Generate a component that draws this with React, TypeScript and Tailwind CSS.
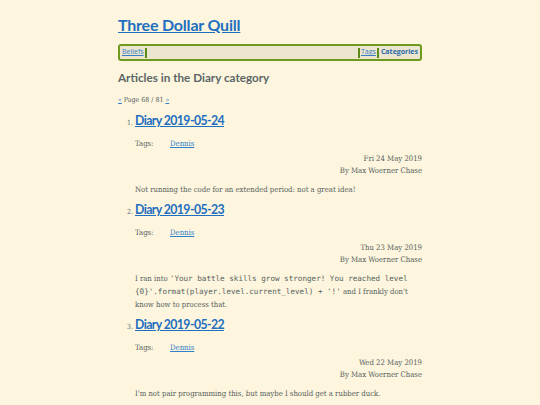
import React from "react";

const head = { fontFamily: 'Lato, "Noto Sans", sans-serif' } as const;
const nav = { fontFamily: '"Open Sans", "Noto Sans", sans-serif' } as const;

function Entry({ n, title, date, children }: { n: number; title: string; date: string; children: React.ReactNode }) {
  return (
    <li className="flex flex-col">
      <div className="flex items-baseline">
        <span className="w-[17px] pr-[2px] text-right text-[7px] text-[#586e75]">{n}.</span>
        <a href="#" className="text-[12.3px] font-bold leading-[18px] text-[#1f6fc0] underline tracking-[-0.6px]" style={head}>
          {title}
        </a>
      </div>
      <div className="pl-[17px]">
        <div className="mt-[9px] flex text-[7.7px] leading-[10px]">
          <span className="w-[35px]">Tags:</span>
          <a href="#" className="text-[#2f7fca] underline">Dennis</a>
        </div>
        <div className="mt-[4px] text-right text-[7.7px] leading-[11.5px]">
          <div>{date}</div>
          <div>By Max Woerner Chase</div>
        </div>
        <div className="mt-[7px] text-[7.7px] leading-[13px]">{children}</div>
      </div>
    </li>
  );
}

export default function App() {
  return (
    <div
      className="min-h-screen bg-[#fdf5dd] text-[#56625f] [font-stretch:condensed]"
      style={{ fontFamily: '"DejaVu Serif", serif' }}
    >
      <div className="mx-auto w-[304px] pt-[12px]">
        <h1 className="text-[16px] font-bold leading-[26px] text-[#1f6fc0] tracking-[-0.2px]" style={head}>
          <a href="#" className="underline">Three Dollar Quill</a>
        </h1>
        <nav className="mt-[6px] flex h-[17px] items-center rounded-[3px] border-2 border-[#6e9a1e] bg-[#ece5cf] px-[2px] text-[7px] [font-stretch:normal]" style={nav}>
          <a href="#" className="text-[#3a7fc4] underline">Beliefs</a>
          <span className="ml-[1px] h-[10px] w-[2px] bg-[#5e8a18]" />
          <span className="flex-1" />
          <span className="h-[10px] w-[2px] bg-[#5e8a18]" />
          <a href="#" className="ml-[1px] text-[#3a7fc4] underline">Tags</a>
          <span className="ml-[1px] h-[10px] w-[2px] bg-[#5e8a18]" />
          <a href="#" className="ml-[2px] font-bold text-[#2a6aa8]">Categories</a>
        </nav>
        <h2 className="mt-[6px] text-[11.7px] font-bold leading-[20px] text-[#5b6668]" style={head}>
          Articles in the Diary category
        </h2>
        <p className="mt-[8px] text-[7px] leading-[10px]">
          <a href="#" className="text-[#2f7fca] underline">«</a> Page 68 / 81{" "}
          <a href="#" className="text-[#2f7fca] underline">»</a>
        </p>
        <ol className="mt-[7px] flex flex-col gap-[5px]">
          <Entry n={1} title="Diary 2019-05-24" date="Fri 24 May 2019">
            Not running the code for an extended period: not a great idea!
          </Entry>
          <Entry n={2} title="Diary 2019-05-23" date="Thu 23 May 2019">
            I ran into{" "}
            <code style={{ fontFamily: '"DejaVu Sans Mono", monospace' }} className="text-[7.6px] [font-stretch:normal]">
              'Your battle skills grow stronger! You reached level {"{0}"}'.format(player.level.current_level) + '!'
            </code>{" "}
            and I frankly don't know how to process that.
          </Entry>
          <Entry n={3} title="Diary 2019-05-22" date="Wed 22 May 2019">
            I'm not pair programming this, but maybe I should get a rubber duck.
          </Entry>
        </ol>
      </div>
    </div>
  );
}
